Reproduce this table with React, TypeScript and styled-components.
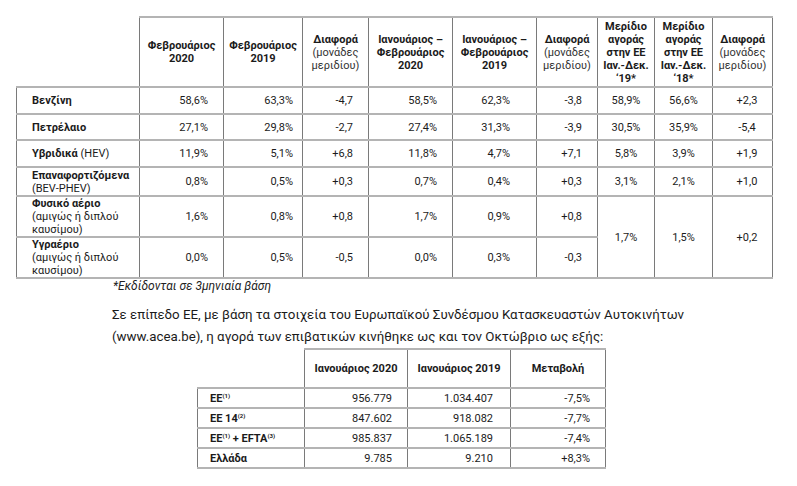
import React from 'react';
import styled, { createGlobalStyle } from 'styled-components';

const GlobalStyle = createGlobalStyle`
  html, body {
    margin: 0;
    padding: 0;
    background: #ffffff;
  }
  body {
    font-family: Roboto, 'Noto Sans', 'Liberation Sans', sans-serif;
    color: #1b1b1b;
  }
`;

const Page = styled.div`
  width: 797px;
  padding: 16px 0 0 16px;
  box-sizing: border-box;
`;

const Table = styled.table<{ $width: number; $left?: number }>`
  width: ${(p) => p.$width}px;
  margin-left: ${(p) => p.$left || 0}px;
  border-collapse: collapse;
  table-layout: fixed;
  font-size: 11px;
  line-height: 13px;
`;

const Th = styled.th<{ $blank?: boolean }>`
  font-weight: 700;
  text-align: center;
  vertical-align: middle;
  padding: 0 3px;
  border-left: 1px solid #7a7a7a;
  border-right: 1px solid #7a7a7a;
  border-top: 2px solid #b4b4b4;
  border-bottom: 2px solid #b4b4b4;
  ${(p) => p.$blank && 'border: none;'}
`;

const Sub = styled.span`
  display: block;
  font-weight: 400;
  color: #333;
`;

const Label = styled.td<{ $pad: number }>`
  text-align: left;
  vertical-align: middle;
  padding: 0 0 0 ${(p) => p.$pad}px;
  border-left: 1px solid #7a7a7a;
  border-right: 1px solid #7a7a7a;
  border-top: 2px solid #b4b4b4;
  border-bottom: 2px solid #b4b4b4;
  b {
    font-weight: 700;
  }
  span {
    font-weight: 400;
  }
`;

const Td = styled.td<{ $pr?: number; $center?: boolean }>`
  text-align: ${(p) => (p.$center ? 'center' : 'right')};
  padding: 0 ${(p) => (p.$center ? 0 : p.$pr || 14)}px 0 0;
  vertical-align: middle;
  border-left: 1px solid #7a7a7a;
  border-right: 1px solid #7a7a7a;
  border-top: 2px solid #b4b4b4;
  border-bottom: 2px solid #b4b4b4;
`;

const Row = styled.tr<{ $h: number }>`
  height: ${(p) => p.$h}px;
`;

const Footnote = styled.div`
  margin: 1px 0 0 97px;
  font-size: 12px;
  line-height: 13px;
  font-style: italic;
  color: #222;
`;

const Paragraph = styled.p`
  margin: 11px 0 0 96px;
  width: 640px;
  font-size: 13.3px;
  line-height: 22px;
  color: #1b1b1b;
`;

const Sup = styled.sup`
  font-size: 6px;
  vertical-align: 4px;
  line-height: 0;
`;

const topCols = [123, 84, 79, 66, 84, 84, 61, 57, 58, 60];
const padR = [15, 9, 15, 15, 26, 15];

type TopRow = {
  name: string;
  extra?: string;
  sub?: string[];
  h: number;
  vals: string[];
  share?: string[];
};

const topRows: TopRow[] = [
  { name: 'Βενζίνη', h: 27, vals: ['58,6%', '63,3%', '-4,7', '58,5%', '62,3%', '-3,8'], share: ['58,9%', '56,6%', '+2,3'] },
  { name: 'Πετρέλαιο', h: 26, vals: ['27,1%', '29,8%', '-2,7', '27,4%', '31,3%', '-3,9'], share: ['30,5%', '35,9%', '-5,4'] },
  { name: 'Υβριδικά', extra: ' (HEV)', h: 27, vals: ['11,9%', '5,1%', '+6,8', '11,8%', '4,7%', '+7,1'], share: ['5,8%', '3,9%', '+1,9'] },
  { name: 'Επαναφορτιζόμενα', sub: ['(BEV-PHEV)'], h: 29, vals: ['0,8%', '0,5%', '+0,3', '0,7%', '0,4%', '+0,3'], share: ['3,1%', '2,1%', '+1,0'] },
  { name: 'Φυσικό αέριο', sub: ['(αμιγώς ή διπλού', 'καυσίμου)'], h: 41, vals: ['1,6%', '0,8%', '+0,8', '1,7%', '0,9%', '+0,8'], share: ['1,7%', '1,5%', '+0,2'] },
  { name: 'Υγραέριο', sub: ['(αμιγώς ή διπλού', 'καυσίμου)'], h: 41, vals: ['0,0%', '0,5%', '-0,5', '0,0%', '0,3%', '-0,3'] },
];

const bottomRows = [
  { label: <>ΕΕ<Sup>(1)</Sup></>, vals: ['956.779', '1.034.407', '-7,5%'] },
  { label: <>ΕΕ 14<Sup>(2)</Sup></>, vals: ['847.602', '918.082', '-7,7%'] },
  { label: <>ΕΕ<Sup>(1)</Sup> + EFTA<Sup>(3)</Sup></>, vals: ['985.837', '1.065.189', '-7,4%'] },
  { label: <>Ελλάδα</>, vals: ['9.785', '9.210', '+8,3%'] },
];

const bottomPad = [15, 17, 15];

export default function App() {
  return (
    <>
      <GlobalStyle />
      <Page>
        <Table $width={756}>
          <colgroup>
            {topCols.map((w, i) => (
              <col key={i} style={{ width: w }} />
            ))}
          </colgroup>
          <thead>
            <Row $h={70}>
              <Th $blank />
              <Th>Φεβρουάριος<br />2020</Th>
              <Th>Φεβρουάριος<br />2019</Th>
              <Th>Διαφορά<Sub>(μονάδες μεριδίου)</Sub></Th>
              <Th>Ιανουάριος –<br />Φεβρουάριος<br />2020</Th>
              <Th>Ιανουάριος –<br />Φεβρουάριος<br />2019</Th>
              <Th>Διαφορά<Sub>(μονάδες μεριδίου)</Sub></Th>
              <Th>Μερίδιο αγοράς στην ΕΕ Ιαν.-Δεκ. ‘19*</Th>
              <Th>Μερίδιο αγοράς στην ΕΕ Ιαν.-Δεκ. ‘18*</Th>
              <Th>Διαφορά<Sub>(μονάδες μεριδίου)</Sub></Th>
            </Row>
          </thead>
          <tbody>
            {topRows.map((r, i) => (
              <Row key={i} $h={r.h}>
                <Label $pad={15}>
                  <b>{r.name}</b>
                  {r.extra && <span>{r.extra}</span>}
                  {r.sub && r.sub.map((s, j) => <div key={j}>{s}</div>)}
                </Label>
                {r.vals.map((v, j) => (
                  <Td key={j} $pr={padR[j]}>{v}</Td>
                ))}
                {r.share &&
                  r.share.map((v, j) => (
                    <Td key={'s' + j} $center rowSpan={i === 4 ? 2 : 1} style={j === 2 ? { paddingLeft: 9 } : undefined}>
                      {v}
                    </Td>
                  ))}
              </Row>
            ))}
          </tbody>
        </Table>
        <Footnote>*Εκδίδονται σε 3μηνιαία βάση</Footnote>
        <Paragraph>
          Σε επίπεδο ΕΕ, με βάση τα στοιχεία του Ευρωπαϊκού Συνδέσμου Κατασκευαστών Αυτοκινήτων
          (www.acea.be), η αγορά των επιβατικών κινήθηκε ως και τον Οκτώβριο ως εξής:
        </Paragraph>
        <Table $width={408} $left={181}>
          <colgroup>
            <col style={{ width: 107 }} />
            <col style={{ width: 103 }} />
            <col style={{ width: 103 }} />
            <col style={{ width: 95 }} />
          </colgroup>
          <thead>
            <Row $h={39}>
              <Th $blank />
              <Th>Ιανουάριος 2020</Th>
              <Th>Ιανουάριος 2019</Th>
              <Th>Μεταβολή</Th>
            </Row>
          </thead>
          <tbody>
            {bottomRows.map((r, i) => (
              <Row key={i} $h={20}>
                <Label $pad={12}>
                  <b>{r.label}</b>
                </Label>
                {r.vals.map((v, j) => (
                  <Td key={j} $pr={bottomPad[j]}>{v}</Td>
                ))}
              </Row>
            ))}
          </tbody>
        </Table>
      </Page>
    </>
  );
}
